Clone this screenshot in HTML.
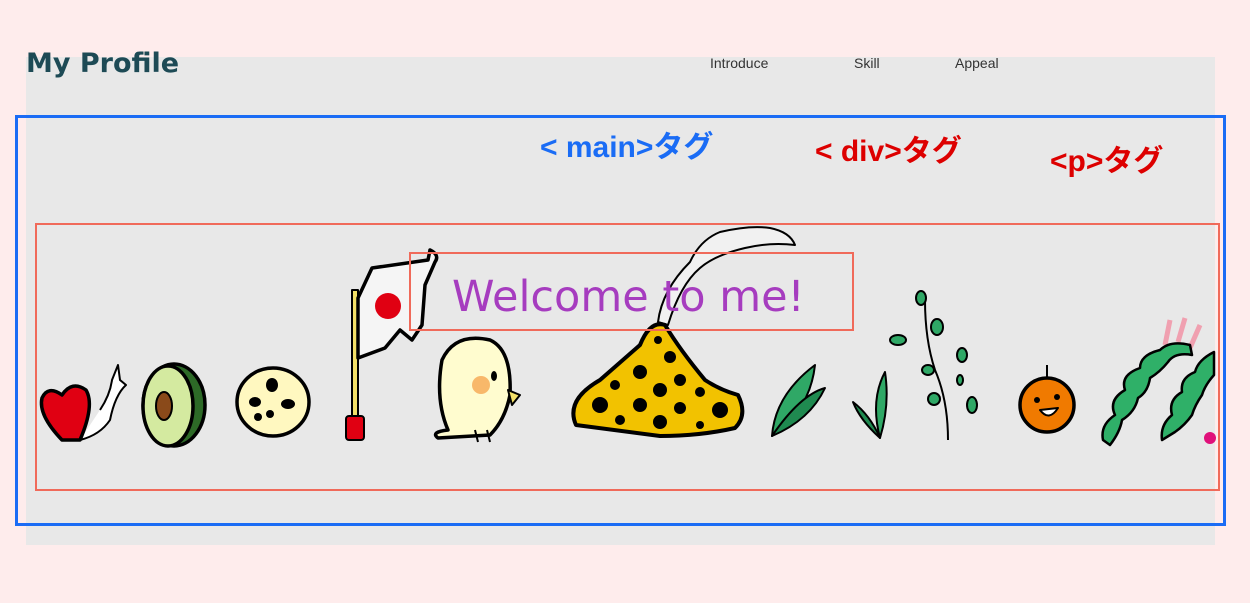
<!DOCTYPE html>
<html><head><meta charset="utf-8"><style>
html,body{margin:0;padding:0}
body{width:1250px;height:603px;background:#feecec;position:relative;overflow:hidden;font-family:"Liberation Sans","Noto Sans CJK JP",sans-serif}
.gray{position:absolute;left:26px;top:57px;width:1189px;height:488px;background:#e8e8e8}
.t{position:absolute;white-space:nowrap}
</style></head><body>
<div class="gray"></div>
<div class="t" style="left:26px;top:48px;font-size:27px;font-weight:bold;color:#1d4a55;font-family:'DejaVu Sans',sans-serif">My Profile</div>
<div class="t" style="left:710px;top:55px;font-size:14px;color:#333">Introduce</div>
<div class="t" style="left:854px;top:55px;font-size:14px;color:#333">Skill</div>
<div class="t" style="left:955px;top:55px;font-size:14px;color:#333">Appeal</div>
<div class="t" style="left:540px;top:122px;font-size:30px;color:#1a6cf5;font-weight:bold">&lt; main&gt;タグ</div>
<div class="t" style="left:815px;top:126px;font-size:30px;color:#d00;font-weight:bold">&lt; div&gt;タグ</div>
<div class="t" style="left:1050px;top:136px;font-size:30px;color:#d00;font-weight:bold">&lt;p&gt;タグ</div>
<svg width="1250" height="603" style="position:absolute;left:0;top:0">
<rect x="16.5" y="116.5" width="1208" height="408" fill="none" stroke="#1a6cf5" stroke-width="3"/>
<rect x="36" y="224" width="1183" height="266" fill="none" stroke="#f06a5a" stroke-width="2"/>
<g stroke="#000" stroke-width="3.5" stroke-linejoin="round">
<path d="M100,410 Q110,395 112,380 L118,365 L120,380 L126,385 Q115,395 110,420 Q100,435 80,440" fill="#fff" stroke-width="2"/>
<path d="M62,440 Q38,415 42,398 Q48,385 62,395 Q72,380 86,390 Q95,405 80,440 Z" fill="#e00012"/>
<ellipse cx="174" cy="405" rx="31" ry="41" fill="#2d6a27"/>
<ellipse cx="168" cy="406" rx="25" ry="40" fill="#d4eaa0"/>
<ellipse cx="164" cy="406" rx="8" ry="14" fill="#8a4a1a" stroke-width="2"/>
<ellipse cx="273" cy="402" rx="36" ry="34" fill="#fff8c0"/>
<g fill="#000" stroke="none"><ellipse cx="272" cy="385" rx="6" ry="7"/><ellipse cx="255" cy="402" rx="6" ry="5"/><ellipse cx="288" cy="404" rx="7" ry="5"/><ellipse cx="270" cy="414" rx="4" ry="4"/><ellipse cx="258" cy="417" rx="4" ry="4"/></g>
<rect x="352" y="290" width="6" height="130" fill="#f3e068" stroke-width="2"/>
<rect x="346" y="416" width="18" height="24" rx="3" fill="#e00012" stroke-width="2"/>
<path d="M358,298 L372,268 L428,260 L430,250 Q440,255 435,262 L425,285 L422,325 L412,340 L400,330 L385,348 L358,358 Z" fill="#f5f5f5"/>
<circle cx="388" cy="306" r="13" fill="#e00012" stroke="none"/>
<path d="M448,430 Q435,400 442,360 Q455,332 490,340 Q512,350 510,395 Q505,420 490,435 L438,438 Q430,432 448,430 Z" fill="#fffccf"/>
<circle cx="481" cy="385" r="9" fill="#f8b86a" stroke="none"/>
<ellipse cx="494" cy="376" rx="3" ry="5" fill="#000" stroke="none"/>
<path d="M508,390 L520,395 L512,405 Z" fill="#f3e068" stroke-width="2"/>
<path d="M475,430 L478,442 M487,430 L490,442" stroke-width="2"/>
<path d="M658,322 Q662,290 690,262 Q700,240 720,232 Q750,225 770,228 Q790,232 795,245 Q770,242 745,248 Q715,255 700,268 Q680,285 668,325 Z" fill="#f1f1f1" stroke-width="2"/>
<path d="M576,425 Q565,400 600,380 L640,345 Q650,320 665,325 Q680,350 705,380 Q720,390 738,395 Q748,415 735,428 Q700,436 660,436 Z" fill="#f2c200" stroke-width="4"/>
<g fill="#000" stroke="none"><circle cx="658" cy="340" r="4"/><circle cx="670" cy="357" r="6"/><circle cx="640" cy="372" r="7"/><circle cx="680" cy="380" r="6"/><circle cx="615" cy="385" r="5"/><circle cx="660" cy="390" r="7"/><circle cx="700" cy="392" r="5"/><circle cx="600" cy="405" r="8"/><circle cx="640" cy="405" r="7"/><circle cx="680" cy="408" r="6"/><circle cx="720" cy="410" r="8"/><circle cx="620" cy="420" r="5"/><circle cx="660" cy="422" r="7"/><circle cx="700" cy="425" r="4"/></g>
<path d="M772,436 Q775,395 815,365 Q810,410 772,436 Z" fill="#2fa866" stroke-width="2"/>
<path d="M772,436 Q800,395 825,388 Q810,420 772,436 Z" fill="#1f8a50" stroke-width="2"/>
<path d="M880,438 Q890,405 885,372 Q870,400 880,438 Z" fill="#2fa866" stroke-width="2"/>
<path d="M880,438 Q860,420 853,402 Q870,415 880,438 Z" fill="#1f8a50" stroke-width="2"/>
<path d="M948,440 Q948,400 935,370 Q925,340 925,300" fill="none" stroke-width="2"/>
<g fill="#2fa866" stroke-width="2"><ellipse cx="921" cy="298" rx="5" ry="7"/><ellipse cx="937" cy="327" rx="6" ry="8"/><ellipse cx="898" cy="340" rx="8" ry="5"/><ellipse cx="962" cy="355" rx="5" ry="7"/><ellipse cx="928" cy="370" rx="6" ry="5"/><ellipse cx="934" cy="399" rx="6" ry="6"/><ellipse cx="972" cy="405" rx="5" ry="8"/><ellipse cx="960" cy="380" rx="3" ry="5"/></g>
<circle cx="1047" cy="405" r="27" fill="#f07a00"/>
<path d="M1047,378 L1047,365" stroke-width="2"/>
<circle cx="1037" cy="400" r="3" fill="#000" stroke="none"/><circle cx="1057" cy="397" r="3" fill="#000" stroke="none"/>
<path d="M1040,410 Q1049,422 1058,408 Z" fill="#fff" stroke-width="2"/>
<path d="M1165,345 L1170,320 M1178,342 L1185,318 M1190,348 L1200,325" stroke="#f0a0b0" stroke-width="5"/>
<path d="M1103,440 Q1100,425 1115,415 Q1108,400 1125,390 Q1120,375 1140,368 Q1140,355 1160,350 Q1170,340 1190,345 L1192,355 Q1175,352 1168,362 Q1160,372 1150,378 Q1148,392 1138,398 Q1135,412 1122,420 Q1120,432 1110,445 Z" fill="#2fb068" stroke-width="2.5"/>
<path d="M1162,440 Q1160,425 1172,415 Q1168,400 1182,392 Q1180,378 1195,372 Q1198,360 1214,352 L1214,375 Q1205,385 1202,395 Q1195,405 1192,415 Q1185,425 1175,432 Z" fill="#2fb068" stroke-width="2.5"/>
<circle cx="1210" cy="438" r="6" fill="#e0107a" stroke="none"/>
</g>
<rect x="410" y="253" width="443" height="77" fill="none" stroke="#f06a5a" stroke-width="2"/>
<text x="452" y="311" font-family="DejaVu Sans, sans-serif" font-size="43" fill="#a63cbf">Welcome to me!</text>
</svg>
</body></html>
